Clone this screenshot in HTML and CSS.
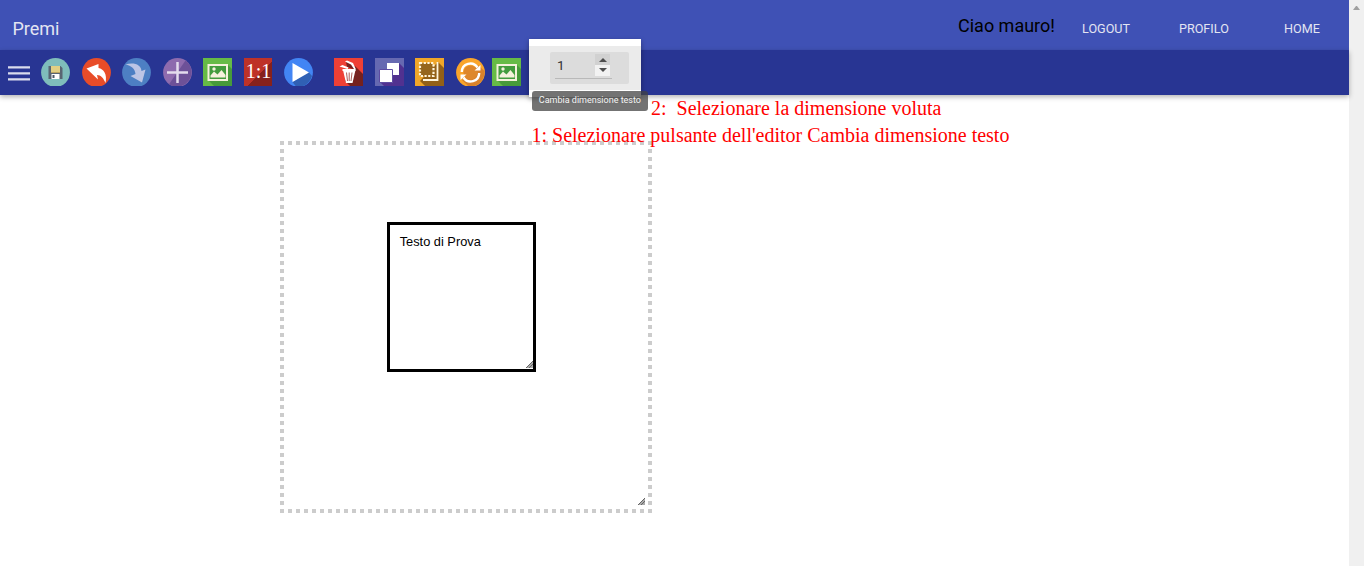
FILE: index.html
```html
<!DOCTYPE html>
<html lang="it">
<head>
<meta charset="utf-8">
<title>Premi</title>
<link rel="stylesheet" href="styles.css">
</head>
<body>
<div class="page">
  <header class="header">
    <span class="brand">Premi</span>
    <span class="greeting">Ciao mauro!</span>
    <nav class="nav"><a class="logout">LOGOUT</a><a class="profile">PROFILO</a><a class="home">HOME</a></nav>
  </header>
  <div class="toolbar">
    <svg class="menu" viewBox="0 0 22 16"><path d="M0 2.300h22M0 8.300h22M0 14.300h22" stroke="#d9dcee" stroke-width="2.200"/></svg>
    <svg class="tool" viewBox="0 0 29 28"><circle cx="14.5" cy="14.5" r="14.4" fill="#7fbdbb"/><path d="M7.500 8h12l2 2v11h-14z" fill="#596572"/><path d="M10 8h9v7h-9z" fill="#e1cf83"/><path d="M10 14.500h9" stroke="#bca562"/><path d="M10.500 16h8v5h-8z" fill="#fff"/><path d="M11.500 17h2v3h-2z" fill="#4c5866"/></svg>
    <svg class="tool t-undo" viewBox="0 0 29 28"><circle cx="14.500" cy="14.500" r="14.400" fill="#e84c28"/><path d="M4.500 10.500L16.500 6v4C21.500 11 25.500 16 23.500 25 21.500 20 19 17 15 17L16 21.500z" fill="#fff"/></svg>
    <svg class="tool t-redo" viewBox="0 0 29 28"><circle cx="14.500" cy="14.500" r="14.400" fill="#4d7fc3"/><path d="M3.500 6.500C12 4 19 6.500 19.500 13l4-1.500-3.500 13L8.500 18l5-2C13 11 9.500 7.500 3.500 6.500z" fill="#bcc5e5"/></svg>
    <svg class="tool t-add" viewBox="0 0 29 28"><circle cx="14.500" cy="14.500" r="14.400" fill="#8e6bae"/><path d="M22.500 2.600A14.400 14.400 0 0 1 6 26.200z" fill="#6d5198"/><path d="M14.500 4v21M4 14.500h21" stroke="#e4dced" stroke-width="2.500"/></svg>
    <svg class="tool t-image" viewBox="0 0 29 28"><path d="M0 0h29v28H0z" fill="#66bb46"/><path d="M25 7l4 4v17H11l-6-6z" fill="#479b3a"/><path d="M5.500 7h18.500v15H5.500z" fill="#439c3d" stroke="#f5f1dc" stroke-width="2"/><path d="M7.500 19.500v-2l3.500-4 3.500 3 4-4.500 4 5v2.500z" fill="#f5f1dc"/><circle cx="11" cy="11" r="1.700" fill="#f5f1dc"/></svg>
    <div class="tool ratio">1:1</div>
    <svg class="tool t-play" viewBox="0 0 29 28"><circle cx="14.500" cy="14.500" r="14.400" fill="#4285f4"/><path d="M24.500 14l3.500 4C25.500 26 19 30 12 28.500L8.500 24z" fill="#3060b4"/><path d="M8.500 5v19L25 14.500z" fill="#fff"/></svg>
    <svg class="tool t-trash" viewBox="0 0 29 28"><path d="M0 0h29v28H0z" fill="#ef4035"/><path d="M21 8l8 8v12H16l-5-5z" fill="#75211e"/><path d="M12 4l7 2 3 6-9-3z" fill="#75211e"/><path d="M5.500 8.500l3-1.500 6 2.500-1 1.500zM11 3.500l2-1 6 2.500 3 6.500-2-.5-3-4.500z" fill="#fff"/><path d="M9 12h12.500l-3 13h-6.500z" fill="#fff"/><path d="M8.500 12h13" stroke="#fff" stroke-width="2"/><path d="M12.500 14.500l1 8.500M15.200 14.500V23M18 14.500l-1 8.500" stroke="#a04b46" stroke-width=".9"/></svg>
    <svg class="tool t-front" viewBox="0 0 29 28"><path d="M0 0h29v28H0z" fill="#6669b1"/><path d="M24 5l5 5v18H9l-4-4z" fill="#513190"/><path d="M12 5h12v12H12z" fill="#fff"/><path d="M4.500 11.500h13v13h-13z" fill="#fff" stroke="#5c4ba1"/></svg>
    <svg class="tool t-select" viewBox="0 0 29 28"><path d="M0 0h29v28H0z" fill="#f0a629"/><path d="M23 4l6 6v18H10l-5-5z" fill="#936017"/><path d="M5 5h13v13H5z" fill="#96661d"/><path d="M5 5h13.500v13H5z" fill="none" stroke="#fff5dc" stroke-width="2.200" stroke-dasharray="2.200 1.500"/><path d="M8 22h14.500V4" fill="none" stroke="#fff5dc" stroke-width="1.800"/></svg>
    <svg class="tool t-rotate" viewBox="0 0 29 28"><circle cx="14.500" cy="14.500" r="14.400" fill="#faa52b"/><path d="M22 7l6.500 6C29 22 22 29 13 28.800L6 22z" fill="#d9812b"/><circle cx="14.500" cy="14.500" r="7" fill="#de872b"/><path d="M5.800 14A8.500 8.500 0 0 1 21.500 9.500M23.200 15A8.500 8.500 0 0 1 7.500 19.500" fill="none" stroke="#fff" stroke-width="2.400"/><path d="M18.500 12.500h6V7zM10.500 16.500h-6V22z" fill="#fff"/></svg>
    <svg class="tool t-image2" viewBox="0 0 29 28"><path d="M0 0h29v28H0z" fill="#66bb46"/><path d="M25 7l4 4v17H11l-6-6z" fill="#479b3a"/><path d="M5.500 7h18.500v15H5.500z" fill="#439c3d" stroke="#f5f1dc" stroke-width="2"/><path d="M7.500 19.500v-2l3.500-4 3.500 3 4-4.500 4 5v2.500z" fill="#f5f1dc"/><circle cx="11" cy="11" r="1.700" fill="#f5f1dc"/></svg>
  </div>
  <main class="workspace">
    <div class="canvas">
      <div class="text-box">Testo di Prova<svg class="grip" viewBox="0 0 7 7"><path d="M0 7L7 0V7z" fill="#aaa"/><path d="M0 7L7 0M3 7l4-4" stroke="#666" stroke-width="1"/></svg></div>
      <svg class="grip canvas-grip" viewBox="0 0 7 7"><path d="M0 7L7 0V7z" fill="#aaa"/><path d="M0 7L7 0M3 7l4-4" stroke="#666" stroke-width="1"/></svg>
    </div>
  </main>
  <div class="size-popup"><div class="size-panel"><div class="size-field"><div class="size-input"><span>1</span><div class="spinner"><i class="up"></i><i class="down"></i></div></div></div></div></div>
  <div class="tooltip"><span>Cambia dimensione testo</span></div>
  <div class="note note-two">2:&nbsp; Selezionare la dimensione voluta</div>
  <div class="note note-one">1: Selezionare pulsante dell'editor Cambia dimensione testo</div>
</div>
<div class="scrollbar"><i></i></div>
</body>
</html>
```

FILE: styles.css
```css
* { box-sizing: border-box; }
body { margin: 0; height: 566px; display: flex; overflow: hidden; background: #fff; font-family: Roboto, sans-serif; }
.page { position: relative; width: 1349px; height: 566px; }
.header { height: 50px; display: flex; background: #3f51b5; color: #e3e5f2; white-space: nowrap; }
.brand { width: 945.500px; margin-left: 12.500px; padding-top: 18px; font-size: 18px; line-height: 22px; }
.greeting { width: 124px; padding-top: 15px; font-size: 18px; line-height: 22px; color: #000; }
.nav { display: flex; padding-top: 20px; font-size: 12.600px; line-height: 18px; }
.logout { width: 97px; }
.profile { width: 105px; }
.toolbar { height: 45px; display: flex; padding: 8px 0 0 8px; background: #283593; box-shadow: 0 2px 5px rgba(0,0,0,.3); }
.menu { width: 22px; height: 16px; margin: 7px 11px 0 0; }
.tool { flex: none; width: 29px; height: 28px; }
.t-undo, .t-add, .ratio, .t-front, .t-rotate { margin-left: 12px; }
.t-redo, .t-image, .t-play, .t-select { margin-left: 11px; }
.t-trash { margin-left: 21px; }
.t-image2 { margin-left: 7px; }
.ratio { width: 28px; margin-right: 1px; padding-left: 1px; background: linear-gradient(135deg, #be3228 56%, #86211c 57%); color: #fff; text-align: center; font: 20px/27px "Liberation Serif", serif; }
.workspace { padding: 46px 0 0 280px; }
.canvas {
  position: relative; width: 372px; height: 372px; padding: 81px 0 0 107px;
  background:
    repeating-linear-gradient(90deg, #ccc 0 4px, transparent 4px 8px) top / 100% 4px no-repeat,
    repeating-linear-gradient(90deg, #ccc 0 4px, transparent 4px 8px) bottom / 100% 4px no-repeat,
    repeating-linear-gradient(#ccc 0 4px, transparent 4px 8px) left / 4px 100% no-repeat,
    repeating-linear-gradient(#ccc 0 4px, transparent 4px 8px) right / 4px 100% no-repeat;
}
.text-box { position: relative; width: 149px; height: 150px; padding: 9px 9.700px; border: 3px solid #000; font: 12.8px/16px "Liberation Sans", sans-serif; }
.grip { position: absolute; right: 0; bottom: 1px; width: 7px; height: 7px; }
.canvas-grip { right: 7px; bottom: 8px; }
.size-popup { position: absolute; left: 529px; top: 39px; width: 112px; height: 58px; padding-top: 7px; background: #fff; box-shadow: 0 2px 5px rgba(0,0,0,.35); }
.size-panel { height: 44px; padding: 6px 12px 6px 21px; background: #ebebeb; }
.size-field { height: 32px; padding: 2px 0 0 5px; border-radius: 2px; background: #dcdcdc; }
.size-input { width: 57px; height: 25px; display: flex; justify-content: space-between; padding: 0 2px; border-bottom: 1px solid #b9b9b9; color: #333; font-size: 13.500px; line-height: 22px; }
.spinner { width: 15px; height: 22px; }
.spinner i { display: flex; height: 11px; align-items: center; justify-content: center; background: #f2f2f2; }
.spinner .up { background: #d1d1d1; }
.spinner i::before { content: ""; border: 4px solid transparent; border-top: 4px solid #4d4d4d; border-bottom: 0; }
.spinner .down { padding-bottom: 1px; }
.spinner .up::before { border-top: 0; border-bottom: 4px solid #4d4d4d; }
.tooltip { position: absolute; left: 532px; top: 91px; width: 116px; height: 20px; padding-left: 6.800px; border-radius: 3px; background: rgba(66,66,66,.74); color: #f5f5f5; font-size: 9px; line-height: 18px; white-space: nowrap; }
.note { position: absolute; color: #f00; font: 20px/24px "Liberation Serif", serif; white-space: nowrap; }
.note-two { left: 651px; top: 96px; }
.note-one { left: 531.500px; top: 123px; }
.scrollbar { width: 15px; padding: 6px 0 0 4px; background: #f0f0f0; }
.scrollbar i { display: block; width: 7px; border: 3.500px solid transparent; border-top: 0; border-bottom: 4px solid #a0a0a0; }
```
